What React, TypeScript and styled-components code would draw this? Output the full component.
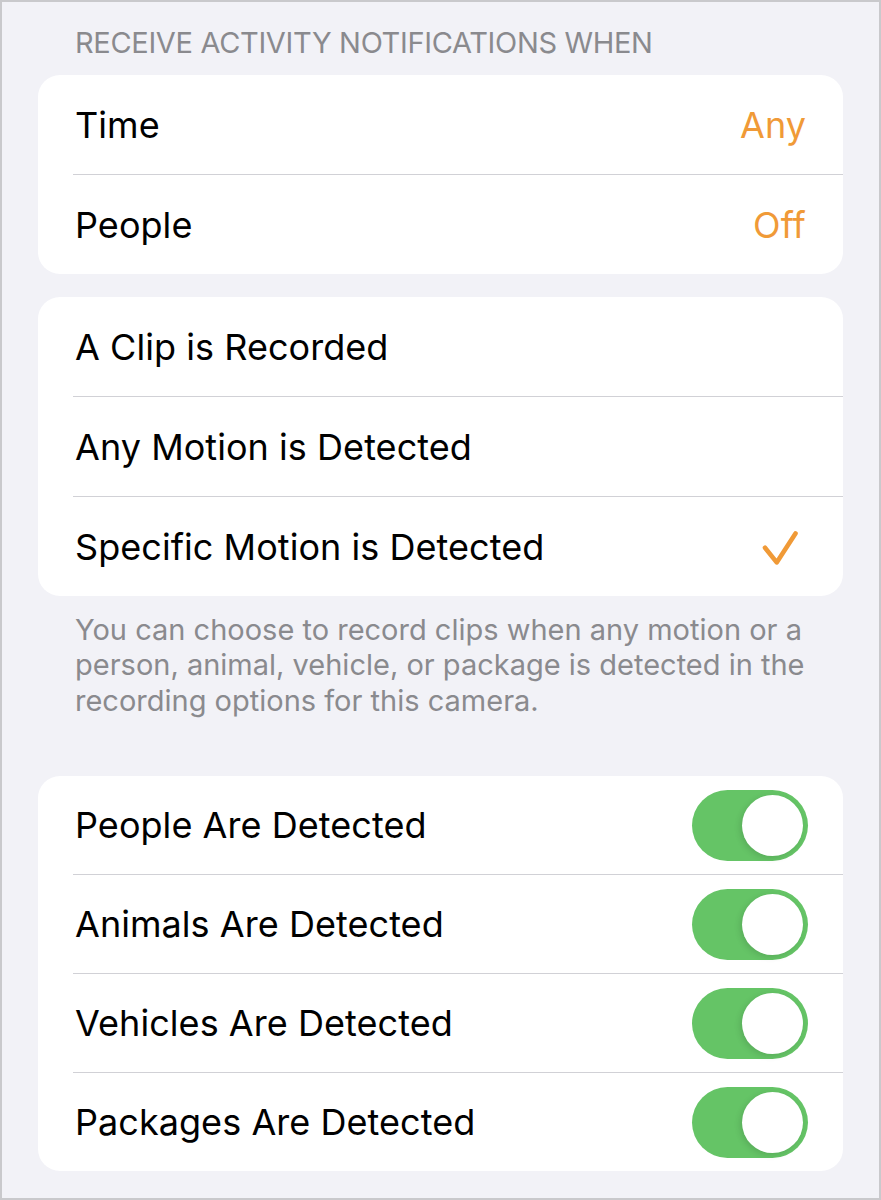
import { FC } from "react";
import styled, { createGlobalStyle } from "styled-components";

const GlobalStyle = createGlobalStyle`
  html, body {
    margin: 0;
    padding: 0;
    background: #f2f2f7;
  }
  * {
    box-sizing: border-box;
  }
`;

const Frame = styled.div`
  width: 881px;
  height: 1200px;
  border: 2px solid #c9c9cc;
  background-color: #f2f2f7;
  padding: 0 36px;
  font-family: "Inter", "Liberation Sans", sans-serif;
  overflow: hidden;
`;

const SectionHeader = styled.div`
  padding: 22.5px 37px 0;
  margin-bottom: 15.5px;
  font-size: 29px;
  line-height: 35px;
  color: #8a8a8e;
  letter-spacing: -0.33px;
  text-transform: uppercase;
`;

const Card = styled.section<{ $gap?: number }>`
  background-color: #ffffff;
  border-radius: 22px;
  overflow: hidden;
  margin-bottom: ${(p) => p.$gap ?? 0}px;
`;

const Row = styled.div`
  display: flex;
  padding-left: 35px;
`;

// first row has no separator, the rest carry a 1px hairline on top
const RowBody = styled.div<{ $first?: boolean; $height: number }>`
  flex: 1;
  display: flex;
  align-items: center;
  justify-content: space-between;
  height: ${(p) => (p.$first ? p.$height : p.$height + 1)}px;
  padding: 0 37px 0 2px;
  border-top: ${(p) => (p.$first ? "none" : "1px solid #d1d1d6")};
`;

const Label = styled.span`
  font-size: 36px;
  color: #000000;
  letter-spacing: 0.05px;
`;

const Value = styled.span`
  font-size: 36px;
  color: #f09a37;
  letter-spacing: 0.05px;
`;

const Footer = styled.p`
  margin: 0;
  padding: 15.5px 37px 0;
  margin-bottom: 58px;
  font-size: 29px;
  line-height: 35.5px;
  color: #8a8a8e;
  letter-spacing: 0px;
`;

const Track = styled.div`
  width: 116px;
  height: 71px;
  border-radius: 36px;
  background-color: #65c466;
  padding: 5px;
  display: flex;
  justify-content: flex-end;
  margin-right: -2px;
`;

const Knob = styled.div`
  width: 61px;
  height: 61px;
  border-radius: 50%;
  background-color: #ffffff;
  box-shadow: -2px 2px 6px rgba(0, 0, 0, 0.12);
`;

const Check = styled.svg`
  width: 36px;
  height: 36px;
  margin-right: 8px;
`;

const Toggle: FC = () => (
  <Track>
    <Knob />
  </Track>
);

const Checkmark: FC = () => (
  <Check viewBox="0 0 36 36">
    <polyline
      points="3,18.7 14.7,33.4 33.5,4.5"
      fill="none"
      stroke="#f09a37"
      strokeWidth="4.6"
      strokeLinecap="round"
      strokeLinejoin="round"
    />
  </Check>
);

type Item = { label: string; right?: "value" | "check" | "toggle"; value?: string };

const ListCard: FC<{ items: Item[]; rowHeight: number; gap?: number }> = ({
  items,
  rowHeight,
  gap,
}) => (
  <Card $gap={gap}>
    {items.map((item, i) => (
      <Row key={item.label}>
        <RowBody $first={i === 0} $height={rowHeight}>
          <Label>{item.label}</Label>
          {item.right === "value" && <Value>{item.value}</Value>}
          {item.right === "check" && <Checkmark />}
          {item.right === "toggle" && <Toggle />}
        </RowBody>
      </Row>
    ))}
  </Card>
);

export default function App() {
  return (
    <>
      <GlobalStyle />
      <Frame>
        <SectionHeader>Receive Activity Notifications When</SectionHeader>
        <ListCard
          rowHeight={99}
          gap={23}
          items={[
            { label: "Time", right: "value", value: "Any" },
            { label: "People", right: "value", value: "Off" },
          ]}
        />
        <ListCard
          rowHeight={99}
          items={[
            { label: "A Clip is Recorded" },
            { label: "Any Motion is Detected" },
            { label: "Specific Motion is Detected", right: "check" },
          ]}
        />
        <Footer>
          You can choose to record clips when any motion or a
          <br />
          person, animal, vehicle, or package is detected in the
          <br />
          recording options for this camera.
        </Footer>
        <ListCard
          rowHeight={98}
          items={[
            { label: "People Are Detected", right: "toggle" },
            { label: "Animals Are Detected", right: "toggle" },
            { label: "Vehicles Are Detected", right: "toggle" },
            { label: "Packages Are Detected", right: "toggle" },
          ]}
        />
      </Frame>
    </>
  );
}
